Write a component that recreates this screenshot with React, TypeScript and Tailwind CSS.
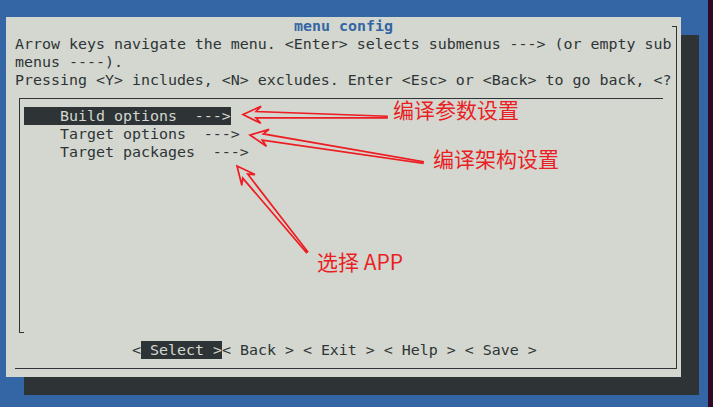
import React from "react";

function arrowPoints(tx: number, ty: number, px: number, py: number): string {
  const dx = px - tx;
  const dy = py - ty;
  const len = Math.hypot(dx, dy);
  const ux = dx / len;
  const uy = dy / len;
  const nx = -uy;
  const ny = ux;
  const L = 18;
  const J = 13;
  const W = 8.5;
  const w1 = 3.2;
  const w0 = 0.8;
  const pts: [number, number][] = [
    [px, py],
    [px - ux * L + nx * W, py - uy * L + ny * W],
    [px - ux * J + nx * w1, py - uy * J + ny * w1],
    [tx + nx * w0, ty + ny * w0],
    [tx - nx * w0, ty - ny * w0],
    [px - ux * J - nx * w1, py - uy * J - ny * w1],
    [px - ux * L - nx * W, py - uy * L - ny * W],
  ];
  return pts.map((p) => `${p[0].toFixed(1)},${p[1].toFixed(1)}`).join(" ");
}

export default function App() {
  return (
    <div className="relative flex w-[713px] h-[407px] overflow-hidden bg-[#3465a4] font-['DejaVu_Sans_Mono',monospace]">
      <div className="w-[708px] pt-[17px] pl-[6px]">
        <div className="flex w-[675px] h-[360px] flex-col bg-[#d3d7cf] text-[14.95px] leading-[18px] text-[#2e3436] shadow-[18px_18px_0_0_#2e3436]">
          <div className="flex h-[18px]">
            <span className="whitespace-pre pl-[288px] font-bold text-[#3465a4]">menu config</span>
            <div className="ml-auto mr-[4px] h-[9px] w-[5px] self-end border-t border-r border-[#2e3436]" />
          </div>
          <div className="ml-[9px] mr-[4px] flex flex-col border-r border-b border-[#2e3436] pb-[9px]">
            <div className="h-[18px] whitespace-pre">Arrow keys navigate the menu. &lt;Enter&gt; selects submenus ---&gt; (or empty sub</div>
            <div className="h-[18px] whitespace-pre">menus ----).</div>
            <div className="h-[18px] whitespace-pre">Pressing &lt;Y&gt; includes, &lt;N&gt; excludes. Enter &lt;Esc&gt; or &lt;Back&gt; to go back, &lt;?</div>
            <div className="ml-[4px] mt-[9px] flex h-[235px] w-[644px] flex-col border-t border-l border-[#2e3436]">
              <div className="flex flex-col pl-[4px] pt-[8px]">
                <div className="h-[18px]">
                  <span className="inline-block whitespace-pre bg-[#2e3436] text-[#d3d7cf]">    Build options  ---&gt;</span>
                </div>
                <div className="h-[18px] whitespace-pre">    Target options  ---&gt;</div>
                <div className="h-[18px] whitespace-pre">    Target packages  ---&gt;</div>
              </div>
              <div className="mt-auto h-px w-[4px] bg-[#2e3436]" />
            </div>
            <div className="h-[8px]" />
            <div className="h-[18px] whitespace-pre pl-[117px]">
              <span>&lt;</span>
              <span className="bg-[#2e3436] text-[#d3d7cf]"> Select &gt;</span>
              <span>&lt; Back &gt; &lt; Exit &gt; &lt; Help &gt; &lt; Save &gt;</span>
            </div>
          </div>
        </div>
      </div>
      <div className="w-[5px] bg-[#300a24]" />

      <svg className="pointer-events-none absolute inset-0" width="713" height="407" viewBox="0 0 713 407">
        <g fill="none" stroke="#ee1d23" strokeWidth="1.7" strokeLinejoin="miter">
          <polygon points={arrowPoints(387, 117, 243, 114.5)} />
          <polygon points={arrowPoints(423, 162.5, 250, 135)} />
          <polygon points={arrowPoints(307, 252, 237, 166)} />
        </g>
      </svg>
      <span className="pointer-events-none absolute left-[393px] top-[99px] whitespace-nowrap text-[21px] leading-[21px] text-[#ea1f26] font-['Noto_Sans_CJK_SC',sans-serif]">编译参数设置</span>
      <span className="pointer-events-none absolute left-[433px] top-[148px] whitespace-nowrap text-[21px] leading-[21px] text-[#ea1f26] font-['Noto_Sans_CJK_SC',sans-serif]">编译架构设置</span>
      <span className="pointer-events-none absolute left-[317px] top-[251px] whitespace-nowrap text-[21px] leading-[21px] text-[#ea1f26] font-['Noto_Sans_CJK_SC',sans-serif]">选择 APP</span>
    </div>
  );
}
